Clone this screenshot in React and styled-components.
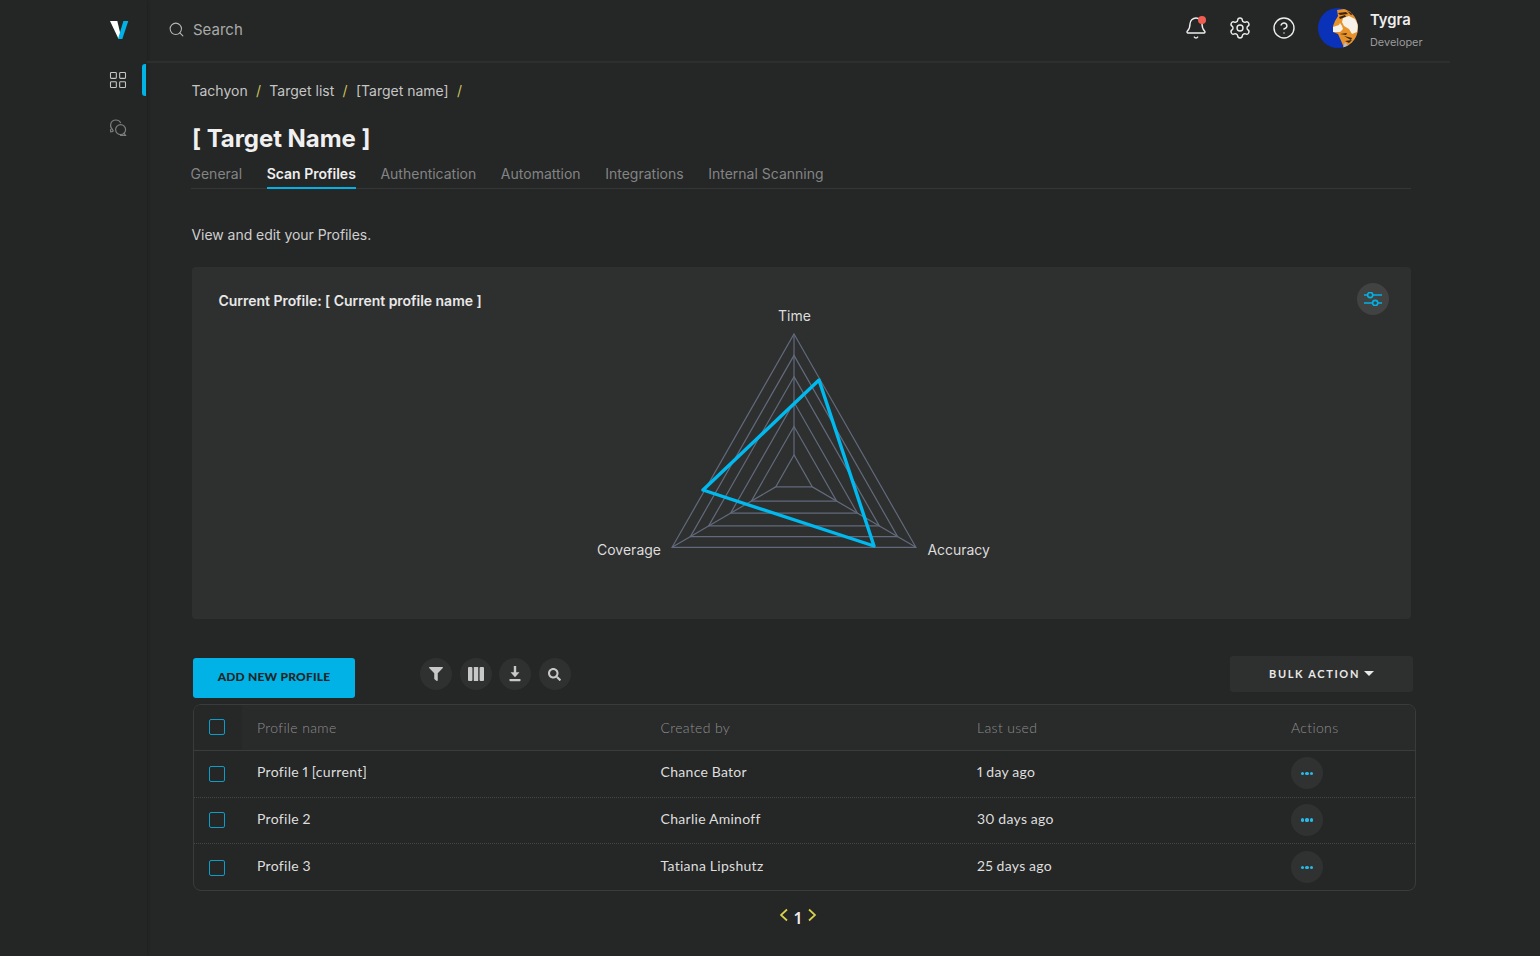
import React from 'react';
import styled, { createGlobalStyle } from 'styled-components';
import { Bell, Settings, CircleHelp, Search, LayoutGrid } from 'lucide-react';
import { FaFilter, FaSearch } from 'react-icons/fa';

const Global = createGlobalStyle`
  html, body { margin: 0; padding: 0; background: #252626; height: 100%; overflow: hidden; }
  body { font-family: Inter, "Liberation Sans", sans-serif; color: #e4e4e4; }
  * { box-sizing: border-box; }
`;

const Shell = styled.div`display: flex; width: 1540px; height: 956px; background: #252626; overflow: hidden;`;

const Sidebar = styled.aside`
  width: 147px; flex: none; display: flex; flex-direction: column; align-items: stretch; padding-top: 21px;
  box-shadow: 1px 0 3px rgba(0,0,0,.18); background: #242525;
`;
const LogoWrap = styled.div`height: 18px; padding-left: 110px; margin-bottom: 25px; line-height: 0;`;
const NavItem = styled.div`
  position: relative; height: 32px; padding-left: ${p => p.$active ? '107.5px' : '109px'}; display: flex; align-items: center; margin-bottom: 16px; color: ${p => p.$active ? '#c4c5c5' : '#7c7d7d'};
  ${p => p.$active && `&::after { content: ''; position: absolute; left: 142px; top: 0; width: 4px; height: 32px; background: #00b2e5; border-radius: 3px 0 0 3px; }`}
`;

const Main = styled.main`width: 1303px; flex: none; display: flex; flex-direction: column;`;
const TopBar = styled.header`
  height: 63px; flex: none; border-bottom: 2px solid #2d2e2e; display: flex; align-items: center; padding: 0 28px 5px 21px;
`;
const SearchIconSlot = styled.div`margin-top: 3px; height: 17px; line-height: 0; color: #b5b6b6;`;
const SearchLabel = styled.span`margin: 2px 0 0 8px; font-size: 15px; color: #a9aaaa;`;
const TopIcons = styled.div`margin-left: auto; display: flex; align-items: center; gap: 20px;`;
const BellWrap = styled.div`position: relative; width: 24px; height: 24px; color: #eee; &::after { content: ''; position: absolute; top: 0; right: 2px; width: 8px; height: 8px; border-radius: 50%; background: #ee5e52; }`;
const IconSlot = styled.div`width: 24px; height: 24px; color: #eee;`;
const User = styled.div`display: flex; align-items: center; margin-left: 22px; gap: 12px;`;
const UserText = styled.div`display: flex; flex-direction: column; width: 52px; margin-top: 4px;`;
const UserName = styled.span`font-size: 14.8px; line-height: 20px; font-weight: 600; color: #eee;`;
const UserRole = styled.span`font-size: 10.9px; line-height: 16px; margin-top: 3.5px; color: #9a9b9b; white-space: nowrap;`;

const Content = styled.div`display: flex; flex-direction: column; width: 1224px; margin-left: 45px; padding-top: 17px;`;
const Crumbs = styled.nav`display: flex; align-items: center; height: 20px; margin-left: -.5px; font-size: 14px; color: #c4c5c5;`;
const Sep = styled.span`color: #c9c45a; margin: 0 8.3px;`;
const Title = styled.h1`margin: 22px 0 0; font-size: 24px; line-height: 34px; font-weight: 700; color: #f0f0f0; height: 34px; letter-spacing: -.05px;`;
const Tabs = styled.div`display: flex; height: 33px; gap: 24.6px; border-bottom: 1px solid #353636; margin-left: -1.5px; width: 1220.5px;`;
const Tab = styled.div`
  height: 33px; font-size: 14px; line-height: 35px; white-space: nowrap;
  color: ${p => p.$active ? '#eee' : '#838484'}; font-weight: ${p => p.$active ? 600 : 400};
  border-bottom: ${p => p.$active ? '2px solid #00b2e5' : 'none'};
`;
const Lead = styled.p`margin: 36px 0 0 -.5px; height: 20px; font-size: 14px; line-height: 20px; color: #cfcfcf; letter-spacing: -.05px;`;

const Card = styled.section`position: relative; margin-top: 22px; width: 1219px; height: 352px; background: #2e2f2f; border-radius: 4px;`;
const CardHead = styled.h2`margin: 0; position: absolute; left: 26.5px; top: 25px; font-size: 14px; line-height: 18px; font-weight: 600; color: #e8e8e8; letter-spacing: -.03px;`;
const RoundBtn = styled.button`
  position: absolute; right: 22px; top: 16px; width: 32px; height: 32px; border: 0; border-radius: 50%; background: #414343; color: #00b2e5; display: flex; align-items: center; justify-content: center; padding: 0;
`;
const Radar = styled.svg`position: absolute; left: 0; top: 0; display: block;`;
const Axis = styled.text`font-family: Inter, "Liberation Sans", sans-serif; font-size: 14px; fill: #dcdcdc;`;

const Toolbar = styled.div`display: flex; align-items: flex-start; height: 48px; margin-top: 37px; padding: 0 3px 0 1px;`;
const AddBtn = styled.button`
  margin-top: 2px; width: 162px; height: 40px; border: 0; border-radius: 3px; background: #00b2e5; color: #1f2626; font-family: Lato, sans-serif; font-weight: 900; font-size: 12px; letter-spacing: .2px; padding: 0 0 3px;
`;
const IconRow = styled.div`display: flex; gap: 7.5px; margin: 2px 0 0 65px;`;
const ToolIcon = styled.button`width: 32px; height: 32px; border: 0; border-radius: 50%; background: #2f3030; color: #c8c8c8; display: flex; align-items: center; justify-content: center; padding: 0;`;
const Bulk = styled.button`
  margin-left: auto; width: 183px; height: 36px; border: 0; border-radius: 3px; background: #2e2f2f; color: #e8e8e8; font-family: Lato, sans-serif; font-weight: 700; font-size: 11px; letter-spacing: 1.65px; display: flex; align-items: center; justify-content: center; gap: 2px; padding: 0 0 1px;
`;
const Caret = styled.span`width: 0; height: 0; border-left: 5px solid transparent; border-right: 5px solid transparent; border-top: 5px solid #e8e8e8; margin-left: 2px;`;

const Table = styled.div`margin-left: 1px; width: 1223px; height: 187px; border: 1px solid #3a3b3b; border-radius: 8px; overflow: hidden;`;
const Row = styled.div`
  display: grid; grid-template-columns: 63px 403.5px 316.5px 314px 1fr; align-items: center; height: ${p => p.$head ? '46px' : '46.67px'};
  background: ${p => p.$head ? '#292a2a' : 'transparent'};
  border-bottom: ${p => p.$head ? '1px solid #3a3b3b' : p.$last ? 'none' : '1px dotted #454646'};
  font-family: Lato, sans-serif;
`;
const CheckCell = styled.div`height: 100%; display: flex; align-items: center; padding-left: 15px; padding-bottom: ${p => p.$head ? '2px' : '0'}; background: ${p => p.$head ? '#262727' : 'transparent'}; margin-right: 15px; width: 48px;`;
const Box = styled.span`display: block; width: 16px; height: 16px; border: 1.5px solid #0d9dc9; border-radius: 2px;`;
const HeadCell = styled.div`font-size: 14px; font-weight: 300; color: #8e8f8f; letter-spacing: .36px;`;
const Cell = styled.div`font-size: 14px; color: #dedede; letter-spacing: .3px; word-spacing: -.4px; padding-bottom: 4px; font-variant-numeric: proportional-nums;`;
const ActionCell = styled.div`padding-bottom: 1px;`;
const Dots = styled.button`width: 32px; height: 32px; border: 0; border-radius: 50%; background: #303131; display: flex; align-items: center; justify-content: center; gap: 1.5px; padding: 0;`;
const Dot = styled.i`display: block; width: 3.2px; height: 3.2px; border-radius: 50%; background: #29b8e6;`;

const Pager = styled.div`display: flex; align-items: center; justify-content: center; gap: 4px; margin-top: 14px; width: 1212px; height: 20px; font-family: "Noto Sans", sans-serif; font-size: 16px; font-weight: 600; color: #eee;`;
const PageNum = styled.span`margin-top: 5px; line-height: 20px;`;

const Logo = () => (
  <svg width="19" height="18" viewBox="0 0 19 18">
    <path d="M0 0h7.3L10.4 13 8.6 18z" fill="#fff" />
    <path d="M13.4 0h4.9L12.3 18H8z" fill="#00b2e5" />
  </svg>
);
const ChatIcon = () => (
  <svg width="18" height="18" viewBox="0 0 18 18" fill="none" stroke="currentColor" strokeWidth="1.2" strokeLinecap="round">
    <path d="M4.2 11.6C2 9.4 1.3 7.6 1.6 5.6 2.1 2.8 4.5 1 7 1c1.9 0 3.7 1 4.5 2.6" />
    <path d="M1.5 10.7l.2 2.2 2.2-.4" />
    <circle cx="11.6" cy="10.6" r="5" />
    <path d="M15 14.2l1.5 2.2h-5" />
  </svg>
);
const Avatar = () => (
  <svg width="40" height="40" viewBox="0 0 40 40">
    <defs><clipPath id="av"><circle cx="20" cy="20" r="20" /></clipPath></defs>
    <g clipPath="url(#av)">
      <rect width="40" height="40" fill="#0a32b8" />
      <path d="M19 2L33 0 42 10V42H27L24 35 20 26 15 24 15 18 17 13 20 8z" fill="#e8922a" />
      <path d="M20 5l8-1 2 2-8 1zM21 9l6-2 1 2-6 2zM29 3l6 3-2 1zM26 28l8 2-1 2zM27 33l7-1-3 3zM22 26l7-1-1 2z" fill="#3a2412" />
      <path d="M15 19l6-2 1-2 2 3 1 3-3 3-7 0z" fill="#f6f2ea" />
      <path d="M25 10l6-2 6 3 3 6-1 7-5 2-3-5-5-3-2-4z" fill="#f6f2ea" />
      <path d="M25 40l2-6 5 6z" fill="#b9bdc2" />
    </g>
  </svg>
);
const ColumnsIcon = () => (
  <svg width="16" height="14" viewBox="0 0 16 14" fill="currentColor">
    <rect x="0" y="0" width="4.4" height="14" rx="1" />
    <rect x="5.8" y="0" width="4.4" height="14" rx=".6" />
    <rect x="11.6" y="0" width="4.4" height="14" rx="1" />
  </svg>
);
const DownloadIcon = () => (
  <svg width="12" height="16" viewBox="0 0 12 16" fill="currentColor">
    <path d="M4.8 0h2.4v6.2h3.3L6 11.2 1.5 6.2h3.3z" />
    <rect x="0.5" y="13" width="11" height="2.2" rx=".6" />
  </svg>
);

const levels = [1, 0.85, 0.7, 0.52, 0.35, 0.15];
const C = { x: 602, y: 209.2 };
const R = 142.2;
const vertex = (k, i) => {
  const a = -Math.PI / 2 + (i * 2 * Math.PI) / 3;
  return [C.x + 0.99 * R * k * Math.cos(a), C.y + R * k * Math.sin(a)];
};
const RadarChart = () => (
  <Radar width="1219" height="352" viewBox="0 0 1219 352">
    {levels.map(k => (
      <polygon key={k} fill="none" stroke="#626a7c" strokeWidth="1.2" points={[0, 1, 2].map(i => vertex(k, i).join(',')).join(' ')} />
    ))}
    {[0, 1, 2].map(i => {
      const [x1, y1] = vertex(1, i);
      const [x2, y2] = vertex(0.15, i);
      return <line key={i} x1={x1} y1={y1} x2={x2} y2={y2} stroke="#626a7c" strokeWidth="1.2" />;
    })}
    <polygon points="627,113 511,223 682,279" fill="none" stroke="#00b9ee" strokeWidth="3.4" strokeLinejoin="round" />
    <Axis x="602.5" y="54" textAnchor="middle">Time</Axis>
    <Axis x="405" y="288">Coverage</Axis>
    <Axis x="735.5" y="288" letterSpacing="-.05">Accuracy</Axis>
  </Radar>
);

const rows = [
  ['Profile 1 [current]', 'Chance Bator', '1 day ago'],
  ['Profile 2', 'Charlie Aminoff', '30 days ago'],
  ['Profile 3', 'Tatiana Lipshutz', '25 days ago'],
];

export default function App() {
  return (
    <Shell>
      <Global />
      <Sidebar>
        <LogoWrap><Logo /></LogoWrap>
        <NavItem $active><LayoutGrid size={20} strokeWidth={1.3} /></NavItem>
        <NavItem><ChatIcon /></NavItem>
      </Sidebar>
      <Main>
        <TopBar>
          <SearchIconSlot><Search size={17} strokeWidth={1.5} /></SearchIconSlot>
          <SearchLabel>Search</SearchLabel>
          <TopIcons>
            <BellWrap><Bell size={24} strokeWidth={1.4} /></BellWrap>
            <IconSlot><Settings size={24} strokeWidth={1.4} /></IconSlot>
            <IconSlot><CircleHelp size={24} strokeWidth={1.4} /></IconSlot>
          </TopIcons>
          <User>
            <Avatar />
            <UserText>
              <UserName>Tygra</UserName>
              <UserRole>Developer</UserRole>
            </UserText>
          </User>
        </TopBar>
        <Content>
          <Crumbs>
            <span>Tachyon</span><Sep>/</Sep><span>Target list</span><Sep>/</Sep><span>[Target name]</span><Sep>/</Sep>
          </Crumbs>
          <Title>[ Target Name ]</Title>
          <Tabs>
            <Tab>General</Tab>
            <Tab $active>Scan Profiles</Tab>
            <Tab>Authentication</Tab>
            <Tab>Automattion</Tab>
            <Tab>Integrations</Tab>
            <Tab>Internal Scanning</Tab>
          </Tabs>
          <Lead>View and edit your Profiles.</Lead>
          <Card>
            <RadarChart />
            <CardHead>Current Profile: [ Current profile name ]</CardHead>
            <RoundBtn>
              <svg width="18" height="14" viewBox="0 0 18 14" fill="none" stroke="currentColor" strokeWidth="1.6">
                <path d="M0 3h3.5M9 3h9M0 11h8.5M14 11h4" />
                <circle cx="6.2" cy="3" r="2.6" />
                <circle cx="11.2" cy="11" r="2.6" />
              </svg>
            </RoundBtn>
          </Card>
          <Toolbar>
            <AddBtn>ADD NEW PROFILE</AddBtn>
            <IconRow>
              <ToolIcon><FaFilter size={14} /></ToolIcon>
              <ToolIcon><ColumnsIcon /></ToolIcon>
              <ToolIcon><DownloadIcon /></ToolIcon>
              <ToolIcon><FaSearch size={13} /></ToolIcon>
            </IconRow>
            <Bulk>BULK ACTION <Caret /></Bulk>
          </Toolbar>
          <Table>
            <Row $head>
              <CheckCell $head><Box /></CheckCell>
              <HeadCell>Profile name</HeadCell>
              <HeadCell>Created by</HeadCell>
              <HeadCell>Last used</HeadCell>
              <HeadCell>Actions</HeadCell>
            </Row>
            {rows.map((r, i) => (
              <Row key={r[0]} $last={i === rows.length - 1}>
                <CheckCell><Box /></CheckCell>
                <Cell>{r[0]}</Cell>
                <Cell>{r[1]}</Cell>
                <Cell>{r[2]}</Cell>
                <ActionCell><Dots><Dot /><Dot /><Dot /></Dots></ActionCell>
              </Row>
            ))}
          </Table>
          <Pager>
            <svg width="10" height="14" viewBox="0 0 10 14" fill="none" stroke="#d8d24e" strokeWidth="1.7"><path d="M8 1.5L2 7l6 5.5" /></svg>
            <PageNum>1</PageNum>
            <svg width="10" height="14" viewBox="0 0 10 14" fill="none" stroke="#d8d24e" strokeWidth="1.7"><path d="M2 1.5L8 7l-6 5.5" /></svg>
          </Pager>
        </Content>
      </Main>
    </Shell>
  );
}
